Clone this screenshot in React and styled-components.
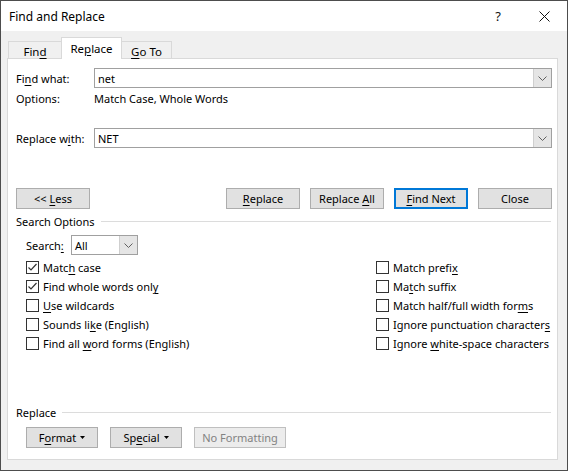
import React from "react";
import styled, { createGlobalStyle } from "styled-components";

const Global = createGlobalStyle`
  html, body { margin: 0; padding: 0; background: #fff; }
  body { font-family: "Noto Sans", "Open Sans", sans-serif; font-size: 11px; color: #000; }
  u { text-decoration-thickness: 1px; text-underline-offset: 2px; }
`;

const Window = styled.div`
  width: 568px;
  height: 471px;
  box-sizing: border-box;
  border: 1px solid #4d4d4d;
  background: #f0f0f0;
  display: flex;
  flex-direction: column;
  white-space: nowrap;
`;

const TitleBar = styled.div`
  height: 30px;
  background: #fff;
  display: flex;
  align-items: center;
  padding-left: 8px;
`;

const Title = styled.div`
  flex: 1;
  font-size: 12px;
`;

const TitleBtn = styled.div`
  width: 46px;
  height: 30px;
  display: flex;
  align-items: center;
  justify-content: center;
  font-size: 13px;
  color: #111;
`;

const Body = styled.div`
  flex: 1;
  padding: 7px 9px 10px 6px;
  display: flex;
  flex-direction: column;
`;

const Tabs = styled.div`
  display: flex;
  align-items: flex-end;
  height: 21px;
  padding-left: 1px;
  position: relative;
  z-index: 1;
  margin-bottom: -1px;
`;

const Tab = styled.div`
  width: ${p => p.$w}px;
  height: ${p => (p.$active ? 22 : 18)}px;
  box-sizing: border-box;
  border: 1px solid #d9d9d9;
  border-bottom: ${p => (p.$active ? "none" : "1px solid #d9d9d9")};
  border-left-width: ${p => (p.$first || p.$active ? 1 : 0)}px;
  border-right-width: ${p => (p.$beforeActive ? 0 : 1)}px;
  background: ${p => (p.$active ? "#fff" : "#f0f0f0")};
  display: flex;
  align-items: center;
  justify-content: center;
  padding-top: ${p => (p.$active ? 0 : 2)}px;
  font-size: 11.5px;
`;

const Panel = styled.div`
  flex: 1;
  background: #fff;
  border: 1px solid #d9d9d9;
  padding: 9px 5px 0 8px;
  display: flex;
  flex-direction: column;
`;

const FieldRow = styled.div`
  display: flex;
  align-items: center;
  height: 20px;
  margin-top: ${p => p.$mt || 0}px;
`;

const Label = styled.div`
  width: 78px;
  flex-shrink: 0;
`;

const Combo = styled.div`
  height: 20px;
  box-sizing: border-box;
  border: 1px solid #a0a0a0;
  display: flex;
  align-items: center;
  background: #fff;
  width: ${p => (p.$w ? p.$w + "px" : "auto")};
  flex: ${p => (p.$w ? "none" : 1)};
`;

const ComboText = styled.div`
  flex: 1;
  padding-left: 3px;
`;

const DropBtn = styled.div`
  width: 17px;
  height: 18px;
  background: #e5e5e5;
  border-left: 1px solid #cfcfcf;
  display: flex;
  align-items: center;
  justify-content: center;
`;

const OptionsRow = styled.div`
  display: flex;
  align-items: center;
  height: 14px;
  margin-top: 3px;
`;

const ButtonRow = styled.div`
  display: flex;
  margin-top: 40px;
  gap: 10px;
`;

const Button = styled.div`
  width: ${p => p.$w || 74}px;
  height: 21px;
  box-sizing: border-box;
  border: 1px solid #adadad;
  border-width: ${p => (p.$default ? 2 : 1)}px;
  border-color: ${p => (p.$disabled ? "#bfbfbf" : p.$default ? "#0078d7" : "#adadad")};
  background: ${p => (p.$disabled ? "#ececec" : "#e1e1e1")};
  color: ${p => (p.$disabled ? "#838383" : "#000")};
  display: flex;
  align-items: center;
  justify-content: center;
  gap: 4px;
`;

const Group = styled.div`
  display: flex;
  align-items: center;
  gap: 6px;
  height: 14px;
  margin-top: ${p => p.$mt || 0}px;
`;

const GroupLine = styled.div`
  flex: 1;
  height: 1px;
  background: #dcdcdc;
  margin-right: 1px;
`;

const SearchRow = styled.div`
  display: flex;
  align-items: center;
  margin-top: 7px;
  padding-left: 10px;
`;

const SearchLabel = styled.div`
  width: 45px;
`;

const Columns = styled.div`
  display: flex;
  padding-left: 10px;
  margin-top: 3px;
`;

const Column = styled.div`
  width: ${p => p.$w || "auto"};
  flex-shrink: 0;
  display: flex;
  flex-direction: column;
`;

const CheckRow = styled.div`
  display: flex;
  align-items: center;
  height: 19px;
  gap: 4px;
`;

const Box = styled.div`
  width: 13px;
  height: 13px;
  box-sizing: border-box;
  border: 1px solid #333;
  background: #fff;
  display: flex;
  align-items: center;
  justify-content: center;
`;

const BottomButtons = styled.div`
  display: flex;
  gap: 12px;
  padding-left: 10px;
  margin-top: 8px;
`;

const Spacer = styled.div`
  flex: 1;
`;

const Chevron = () => (
  <svg width="9" height="5" viewBox="0 0 9 5">
    <polyline points="0.5,0.5 4.5,4.5 8.5,0.5" fill="none" stroke="#606060" strokeWidth="1" />
  </svg>
);

const Caret = () => (
  <svg width="5" height="3" viewBox="0 0 5 3">
    <polygon points="0,0 5,0 2.5,3" fill="#000" />
  </svg>
);

const Check = ({ on }) => (
  <Box>
    {on && (
      <svg width="11" height="11" viewBox="0 0 11 11">
        <polyline points="1.5,5.5 4,8 9.5,2" fill="none" stroke="#333" strokeWidth="1.2" />
      </svg>
    )}
  </Box>
);

const CheckItem = ({ on, children }) => (
  <CheckRow>
    <Check on={on} />
    <span>{children}</span>
  </CheckRow>
);

export default function App() {
  return (
    <>
      <Global />
      <Window>
        <TitleBar>
          <Title>Find and Replace</Title>
          <TitleBtn>?</TitleBtn>
          <TitleBtn>
            <svg width="11" height="11" viewBox="0 0 11 11">
              <path d="M0.5 0.5 L10.5 10.5 M10.5 0.5 L0.5 10.5" stroke="#111" strokeWidth="1" />
            </svg>
          </TitleBtn>
        </TitleBar>
        <Body>
          <Tabs>
            <Tab $w={53} $first $beforeActive><span>Fin<u>d</u></span></Tab>
            <Tab $w={61} $active><span>Re<u>p</u>lace</span></Tab>
            <Tab $w={50}><span><u>G</u>o To</span></Tab>
          </Tabs>
          <Panel>
            <FieldRow>
              <Label>Fi<u>n</u>d what:</Label>
              <Combo>
                <ComboText>net</ComboText>
                <DropBtn><Chevron /></DropBtn>
              </Combo>
            </FieldRow>
            <OptionsRow>
              <Label>Options:</Label>
              <span>Match Case, Whole Words</span>
            </OptionsRow>
            <FieldRow $mt={23}>
              <Label>Replace w<u>i</u>th:</Label>
              <Combo>
                <ComboText>NET</ComboText>
                <DropBtn><Chevron /></DropBtn>
              </Combo>
            </FieldRow>
            <ButtonRow>
              <Button><span>&lt;&lt; <u>L</u>ess</span></Button>
              <Spacer />
              <Button><span><u>R</u>eplace</span></Button>
              <Button><span>Replace <u>A</u>ll</span></Button>
              <Button $default><span><u>F</u>ind Next</span></Button>
              <Button>Close</Button>
            </ButtonRow>
            <Group $mt={5}>
              <span>Search Options</span>
              <GroupLine />
            </Group>
            <SearchRow>
              <SearchLabel>Search<u>:</u></SearchLabel>
              <Combo $w={67}>
                <ComboText>All</ComboText>
                <DropBtn><Chevron /></DropBtn>
              </Combo>
            </SearchRow>
            <Columns>
              <Column $w="350px">
                <CheckItem on>Matc<u>h</u> case</CheckItem>
                <CheckItem on>Find whole words onl<u>y</u></CheckItem>
                <CheckItem><u>U</u>se wildcards</CheckItem>
                <CheckItem>Sounds li<u>k</u>e (English)</CheckItem>
                <CheckItem>Find all <u>w</u>ord forms (English)</CheckItem>
              </Column>
              <Column>
                <CheckItem>Match prefi<u>x</u></CheckItem>
                <CheckItem>Ma<u>t</u>ch suffix</CheckItem>
                <CheckItem>Match half/full width for<u>m</u>s</CheckItem>
                <CheckItem>Ignore punctuation character<u>s</u></CheckItem>
                <CheckItem>Ignore <u>w</u>hite-space characters</CheckItem>
              </Column>
            </Columns>
            <Group $mt={52}>
              <span>Replace</span>
              <GroupLine />
            </Group>
            <BottomButtons>
              <Button $w={72}><span>F<u>o</u>rmat</span><Caret /></Button>
              <Button $w={72}><span>Sp<u>e</u>cial</span><Caret /></Button>
              <Button $w={92} $disabled>No Formatting</Button>
            </BottomButtons>
          </Panel>
        </Body>
      </Window>
    </>
  );
}
